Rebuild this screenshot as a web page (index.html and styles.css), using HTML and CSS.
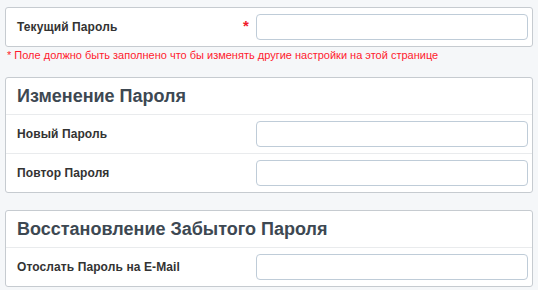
FILE: index.html
```html
<!DOCTYPE html>
<html lang="ru">
<head>
    <meta charset="UTF-8">
    <title>Пароль</title>
    <link rel="stylesheet" href="styles.css">
</head>
<body>
    <div class="box">
        <div class="row first">
            <label class="label" for="current">Текущий Пароль <span class="star">*</span></label>
            <input type="password" id="current">
        </div>
    </div>
    <div class="error">* Поле должно быть заполнено что бы изменять другие настройки на этой странице</div>

    <div class="box">
        <div class="box-title">Изменение Пароля</div>
        <div class="row">
            <label class="label" for="new-pass">Новый Пароль</label>
            <input type="password" id="new-pass">
        </div>
        <div class="row">
            <label class="label" for="repeat-pass">Повтор Пароля</label>
            <input type="password" id="repeat-pass">
        </div>
    </div>

    <div class="box spaced">
        <div class="box-title">Восстановление Забытого Пароля</div>
        <div class="row">
            <label class="label" for="email">Отослать Пароль на E-Mail</label>
            <input type="text" id="email">
        </div>
    </div>
</body>
</html>
```

FILE: styles.css
```css
body {
    font-family: "Liberation Sans", Arial, sans-serif;
    margin: 7px 5px;
    background-color: #f5f7f9;
    color: #333;
}
.box {
    background-color: #fff;
    border: 1px solid #c6cbd0;
    border-radius: 3px;
}
.box.spaced {
    margin-top: 17px;
}
.box-title {
    height: 36px;
    line-height: 37px;
    padding: 0 11px;
    font-size: 18px;
    font-weight: bold;
    color: #3d4852;
}
.row {
    display: flex;
    align-items: center;
    padding: 6px 4px 6px 11px;
    border-top: 1px solid #e9ebed;
}
.row.first {
    border-top: none;
}
.label {
    flex: 1;
    display: flex;
    font-size: 12px;
    font-weight: bold;
    color: #333;
    letter-spacing: 0.1px;
}
.star {
    margin-left: auto;
    margin-right: 7px;
    color: #f01c2c;
    font-size: 15px;
    line-height: 12px;
}
input {
    width: 272px;
    height: 26px;
    box-sizing: border-box;
    border: 1px solid #bfccd8;
    border-radius: 4px;
    background-color: #fff;
}
.error {
    margin: 2px 0 0 2px;
    height: 28px;
    font-size: 11px;
    line-height: 13px;
    color: #ff1a2e;
}
```
